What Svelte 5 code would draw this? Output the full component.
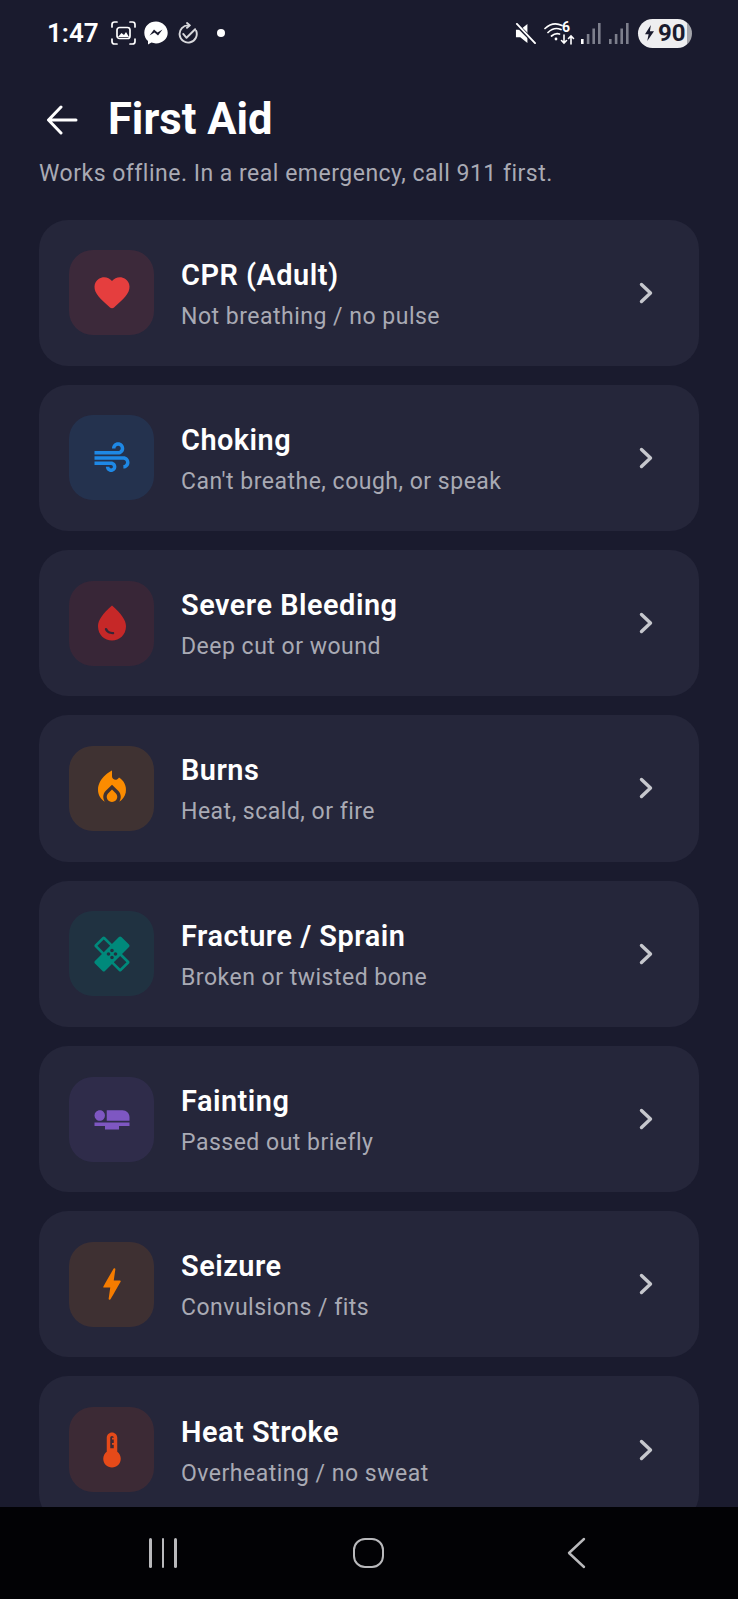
<script>
  const items = [
    { title: 'CPR (Adult)', sub: 'Not breathing / no pulse', color: '#e53e3e', d: 'M13.35 20.13c-.76.69-1.93.69-2.69-.01l-.11-.1C5.3 15.27 1.87 12.16 2 8.28c.06-1.7.93-3.33 2.34-4.29 2.64-1.8 5.9-.96 7.66 1.1 1.76-2.06 5.02-2.91 7.66-1.1 1.41.96 2.28 2.59 2.34 4.29.14 3.88-3.3 6.99-8.55 11.76l-.1.09z' },
    { title: 'Choking', sub: "Can't breathe, cough, or speak", color: '#1e88e5', d: 'M14.5 17c0 1.65-1.35 3-3 3s-3-1.35-3-3h2c0 .55.45 1 1 1s1-.45 1-1-.45-1-1-1H2v-2h9.5c1.65 0 3 1.35 3 3zM19 6.5C19 4.57 17.43 3 15.5 3S12 4.57 12 6.5h2c0-.83.67-1.5 1.5-1.5s1.5.67 1.5 1.5S16.33 8 15.5 8H2v2h13.5c1.93 0 3.5-1.57 3.5-3.5zm-.5 4.5H2v2h16.5c.83 0 1.5.67 1.5 1.5s-.67 1.5-1.5 1.5v2c1.93 0 3.5-1.57 3.5-3.5S20.43 11 18.5 11z' },
    { title: 'Severe Bleeding', sub: 'Deep cut or wound', color: '#c62828', d: 'M12 2c-5.33 4.55-8 8.48-8 11.8 0 4.98 3.8 8.2 8 8.2s8-3.22 8-8.2c0-3.32-2.67-7.25-8-11.8zM8.600 14.800c.35 0 .6.15.7.5.5 1.300 1.900 1.900 3.300 1.800.4 0 .7.3.7.6 0 .4-.3.7-.7.7-1.900.1-4-.8-4.700-2.800-.1-.4.2-.8.7-.8z' },
    { title: 'Burns', sub: 'Heat, scald, or fire', color: '#fb8c00', d: 'M12 12.9l-2.13 2.09C9.31 15.55 9 16.28 9 17.06 9 18.68 10.35 20 12 20s3-1.32 3-2.94c0-.78-.31-1.52-.87-2.07L12 12.9zM16 6l-.44.55C14.38 8.02 12 7.19 12 5.3V2S4 6 4 13c0 2.92 1.56 5.47 3.89 6.86-.56-.79-.89-1.76-.89-2.8 0-1.32.52-2.56 1.47-3.5L12 10.1l3.53 3.47c.95.93 1.47 2.17 1.47 3.5 0 1.02-.31 1.96-.85 2.75 1.89-1.15 3.29-3.06 3.71-5.3.66-3.55-1.07-6.9-3.86-8.52z' },
    { title: 'Fracture / Sprain', sub: 'Broken or twisted bone', color: '#00897b', d: 'M17.73 12.02l3.98-3.98c.39-.39.39-1.02 0-1.41l-4.34-4.34c-.39-.39-1.02-.39-1.41 0l-3.98 3.98L8 2.29C7.8 2.1 7.55 2 7.29 2c-.25 0-.51.1-.7.29L2.25 6.63c-.39.39-.39 1.02 0 1.41l3.98 3.98L2.25 16c-.39.39-.39 1.02 0 1.41l4.34 4.34c.39.39 1.02.39 1.41 0l3.98-3.98 3.98 3.98c.2.2.45.29.71.29.26 0 .51-.1.71-.29l4.34-4.34c.39-.39.39-1.02 0-1.41l-3.99-3.98zM12 9c.55 0 1 .45 1 1s-.45 1-1 1-1-.45-1-1 .45-1 1-1zm-4.71 1.96L3.66 7.34l3.63-3.63 3.62 3.62-3.62 3.63zM10 13c-.55 0-1-.45-1-1s.45-1 1-1 1 .45 1 1-.45 1-1 1zm2 2c-.55 0-1-.45-1-1s.45-1 1-1 1 .45 1 1-.45 1-1 1zm2-4c.55 0 1 .45 1 1s-.45 1-1 1-1-.45-1-1 .45-1 1-1zm2.66 9.34l-3.63-3.62 3.63-3.63 3.62 3.62-3.62 3.63z' },
    { title: 'Fainting', sub: 'Passed out briefly', color: '#7e57c2', d: 'M22 11v2H9V7h9c2.21 0 4 1.79 4 4zM2 14v2h6v2h8v-2h6v-2H2zm5.14-1.9c1.16-1.19 1.14-3.08-.04-4.24-1.19-1.16-3.08-1.14-4.24.04-1.16 1.19-1.14 3.08.04 4.24 1.19 1.16 3.08 1.14 4.24-.04z' },
    { title: 'Seizure', sub: 'Convulsions / fits', color: '#f57c00', d: 'M10.67 21c-.35 0-.62-.31-.57-.66L11 14H7.500c-.88 0-.33-.75-.31-.78 1.260-2.230 3.150-5.530 5.650-9.930.1-.18.3-.29.5-.29.35 0 .62.31.57.66L13 10h3.510c.4 0 .62.19.4.66-3.290 5.740-5.200 9.090-5.750 10.050-.1.18-.29.29-.49.29z' },
    { title: 'Heat Stroke', sub: 'Overheating / no sweat', color: '#e64a19', d: 'M15 13V5c0-1.66-1.34-3-3-3S9 3.34 9 5v8c-1.21.91-2 2.37-2 4 0 2.76 2.24 5 5 5s5-2.24 5-5c0-1.63-.79-3.09-2-4zm-4-8c0-.55.45-1 1-1s1 .45 1 1h-1v1h1v2h-1v1h1v2h-2V5z' }
  ];
</script>

<div class="screen">
  <div class="status">
    <span class="time">1:47</span>
    <svg class="s-shot" viewBox="0 0 25 24" fill="none" stroke="#fff" stroke-width="1.7" stroke-linecap="round">
      <path d="M1 6V3.5Q1 1 3.5 1H6M19 1h2.5Q24 1 24 3.5V6M24 18v2.5q0 2.5-2.5 2.5H19M6 23H3.5Q1 23 1 20.500V18" />
      <rect x="6" y="6.500" width="13" height="11" rx="2.500" />
      <path d="M7 16l3.500-4 2.500 2 2-3 3 5z" fill="#fff" stroke="none" />
    </svg>
    <svg class="s-msg" viewBox="0 0 24 24">
      <path d="M12 0.500C5.400 0.500 0.300 5.300 0.300 11.700c0 3.400 1.400 6.300 3.700 8.300v3.500l3.400-1.900c1.400.5 3 .8 4.600.8 6.600 0 11.700-4.800 11.700-10.700S18.600.500 12 .500z" fill="#fff" />
      <path d="M5.500 14.500l4.500-6 3.500 3 5-3-4.500 6-3.500-3z" fill="#1a1b2e" />
    </svg>
    <svg class="s-check" viewBox="0 0 22 24" fill="none" stroke="#d8d8dc" stroke-width="2" stroke-linecap="round" stroke-linejoin="round">
      <path d="M12 3.500A9 9 0 1 0 20 9" />
      <path d="M10.500 1l3 2.500-3 2.500" />
      <path d="M6.500 12.500l3.500 4 9-9" />
    </svg>
    <span class="dot"></span>
    <span class="spacer"></span>
    <svg class="s-mute" viewBox="0 0 22 22">
      <path d="M1 7h4.500L13 1v20L5.500 15H1z" fill="#fff" />
      <path d="M1.500 1.500l19 19" stroke="#1a1b2e" stroke-width="4" />
      <path d="M2 1l19 20" stroke="#fff" stroke-width="2" stroke-linecap="round" />
    </svg>
    <div class="wifi">
      <svg viewBox="0 0 31 23" fill="none" stroke="#fff" stroke-width="1.700" stroke-linecap="round">
        <path d="M1 6.500Q9-1 18 3.500M4 10.500Q10 4.500 17 7.500M7.500 14q4-3.500 8-2" />
        <circle cx="12" cy="17" r="1.400" fill="#fff" stroke="none" />
        <path d="M20 13v8m-2.500-2.500l2.500 2.500 2.500-2.500M27 22v-8m-2.500 2.500L27 14l2.500 2.500" stroke-width="1.600" />
      </svg>
      <span>6</span>
    </div>
    <svg class="s-sig" viewBox="0 0 20 21">
      <rect x="0" y="16" width="2.600" height="5" fill="#fff" />
      <rect x="5.800" y="11" width="2.600" height="10" fill="#7d7f8c" />
      <rect x="11.400" y="5.500" width="2.600" height="15.500" fill="#7d7f8c" />
      <rect x="17" y="0" width="2.600" height="21" fill="#7d7f8c" />
    </svg>
    <svg class="s-sig two" viewBox="0 0 20 21">
      <rect x="0" y="16" width="2.600" height="5" fill="#7d7f8c" />
      <rect x="5.800" y="11" width="2.600" height="10" fill="#7d7f8c" />
      <rect x="11.400" y="5.500" width="2.600" height="15.500" fill="#7d7f8c" />
      <rect x="17" y="0" width="2.600" height="21" fill="#7d7f8c" />
    </svg>
    <div class="battery">
      <svg viewBox="0 0 12 20"><path d="M7.500 1L1 11.500h4L3.500 19 11 8H6.500z" fill="#1a1b2e" /></svg>
      <span>90</span>
    </div>
  </div>

  <div class="header">
    <svg class="back" viewBox="0 0 32 30" fill="none" stroke="#fff" stroke-width="3" stroke-linecap="round" stroke-linejoin="round">
      <path d="M30 15H3M15 2L2.500 15 15 28" />
    </svg>
    <h1>First Aid</h1>
  </div>
  <p class="note">Works offline. In a real emergency, call 911 first.</p>

  <div class="list">
    {#each items as item}
      <div class="card">
        <div class="icon-box" style="--c: {item.color}">
          <svg viewBox="0 0 24 24" width="42" height="42"><path fill-rule="evenodd" fill={item.color} d={item.d} /></svg>
        </div>
        <div class="text">
          <div class="title">{item.title}</div>
          <div class="sub">{item.sub}</div>
        </div>
        <svg class="chev" viewBox="0 0 14 22" fill="none" stroke="#c6c7cd" stroke-width="3.400" stroke-linecap="round" stroke-linejoin="round">
          <path d="M2.500 2.500L11.500 11l-9 8.500" />
        </svg>
      </div>
    {/each}
  </div>

  <div class="nav">
    <div class="recents"><span></span><span></span><span></span></div>
    <div class="home"></div>
    <svg class="nav-back" viewBox="0 0 20 32" fill="none" stroke="#b9b9bc" stroke-width="2.400" stroke-linecap="round" stroke-linejoin="round">
      <path d="M18 2L3 16l15 14" />
    </svg>
  </div>
</div>

<style>
  :global(body) {
    margin: 0;
    background: #1a1b2e;
  }

  .screen {
    width: 738px;
    height: 1599px;
    display: flex;
    flex-direction: column;
    overflow: hidden;
    background: #1a1b2e;
    color: #fff;
    font-family: Roboto, sans-serif;
  }

  .status {
    height: 66px;
    flex: none;
    display: flex;
    align-items: center;
    padding: 0 46px 0 47px;
    box-sizing: border-box;
  }

  .time {
    font-size: 26px;
    font-weight: 600;
    line-height: 30px;
    margin-right: 12px;
  }

  .s-shot { width: 25px; height: 24px; margin-right: 8px; }
  .s-msg { width: 24px; height: 24px; margin-right: 9px; }
  .s-check { width: 21px; height: 23px; margin-right: 19px; }
  .dot { width: 8px; height: 8px; border-radius: 50%; background: #fff; }
  .spacer { flex: 1; }
  .s-mute { width: 21px; height: 21px; margin-right: 8px; }

  .wifi {
    position: relative;
    width: 31px;
    height: 23px;
    margin-right: 6px;
  }

  .wifi svg { width: 31px; height: 23px; display: block; }

  .wifi span {
    position: absolute;
    left: 18px;
    top: -2px;
    font-size: 14px;
    font-weight: 700;
    line-height: 14px;
  }

  .s-sig { width: 20px; height: 21px; margin-right: 8px; margin-top: 1px; }
  .s-sig.two { margin-right: 9px; }

  .battery {
    width: 54px;
    height: 29px;
    border-radius: 15px;
    background: linear-gradient(90deg, #eeeef0 90%, #a4a5ab 90%);
    display: flex;
    align-items: center;
    padding-left: 6px;
    box-sizing: border-box;
    color: #1a1b2e;
    font-size: 24px;
    font-weight: 700;
  }

  .battery svg { width: 11px; height: 18px; margin-right: 3px; }

  .header {
    display: flex;
    align-items: center;
    padding: 27px 0 0 46px;
    height: 54px;
    flex: none;
  }

  .back { width: 32px; height: 30px; margin-right: 30px; }

  h1 {
    margin: 0;
    font-size: 43.5px;
    font-weight: 700;
    line-height: 54px;
  }

  .note {
    margin: 11px 0 29.5px 39px;
    font-size: 23px;
    line-height: 32px;
    letter-spacing: 0.5px;
    color: #a9aab4;
  }

  .list {
    flex: 1;
    min-height: 0;
    overflow: hidden;
    display: flex;
    flex-direction: column;
    gap: 19.1px;
    padding: 0 39px;
  }

  .card {
    flex: none;
    height: 146.2px;
    box-sizing: border-box;
    display: flex;
    align-items: center;
    padding: 0 46px 0 30px;
    background: #25263a;
    border-radius: 29px;
  }

  .icon-box {
    width: 85px;
    height: 85px;
    flex: none;
    border-radius: 24px;
    display: flex;
    align-items: center;
    justify-content: center;
    background: color-mix(in srgb, var(--c) 12%, transparent);
    margin-right: 27px;
  }

  .text { flex: 1; min-width: 0; padding-top: 4px; }

  .title {
    font-size: 28.9px;
    font-weight: 600;
    line-height: 36px;
    letter-spacing: 0.5px;
  }

  .sub {
    margin-top: 8px;
    font-size: 23px;
    line-height: 32px;
    letter-spacing: 0.5px;
    color: #a9aab4;
  }

  .chev { width: 14px; height: 22px; flex: none; }

  .nav {
    height: 92px;
    flex: none;
    background: #020205;
    display: flex;
    align-items: center;
    justify-content: space-between;
    padding: 0 152px 0 149px;
    box-sizing: border-box;
  }

  .recents { display: flex; gap: 10px; }
  .recents span { width: 2.500px; height: 30px; background: #b9b9bc; border-radius: 2px; }

  .home {
    width: 27px;
    height: 26px;
    margin-right: 5px;
    border: 2.600px solid #b9b9bc;
    border-radius: 12px;
  }

  .nav-back { width: 20px; height: 32px; }
</style>
